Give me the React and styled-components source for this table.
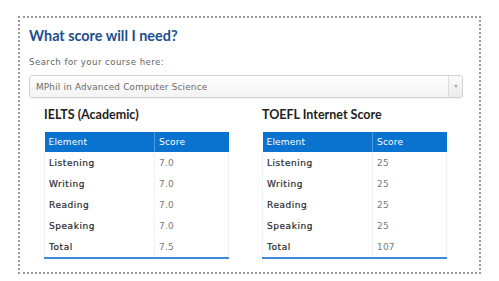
import React from "react";
import styled, { createGlobalStyle } from "styled-components";

const Global = createGlobalStyle`
  html, body { margin: 0; padding: 0; background: #fff; }
  body { font-family: "DejaVu Sans", Verdana, sans-serif; }
`;

const Page = styled.div`
  padding: 16px 18px 6px 18px;
`;

const Panel = styled.section`
  width: 463px;
  height: 258px;
  box-sizing: border-box;
  border: 2px dotted #9a9a9a;
  padding: 8px 16px 0 9px;
`;

const Title = styled.h2`
  margin: 0;
  font-family: "Lato", "Open Sans", sans-serif;
  font-weight: 700;
  font-size: 14.4px;
  line-height: 20px;
  color: #1d4f8e;
`;

const Label = styled.div`
  margin-top: 10px;
  font-size: 8.6px;
  line-height: 12px;
  letter-spacing: 0.45px;
  color: #666;
`;

const Select = styled.div`
  margin-top: 7px;
  height: 23px;
  box-sizing: border-box;
  display: flex;
  border: 1px solid #d2d2d2;
  border-radius: 3px;
  background: linear-gradient(#ffffff, #f3f3f3);
  box-shadow: 0 1px 1px rgba(0, 0, 0, 0.06);
`;

const SelectText = styled.div`
  flex: 1;
  display: flex;
  align-items: center;
  padding-left: 6px;
  font-size: 8.8px;
  letter-spacing: 0.22px;
  color: #6a6a6a;
`;

const SelectArrow = styled.div`
  width: 13px;
  border-left: 1px solid #dcdcdc;
  display: flex;
  align-items: center;
  justify-content: center;
  background: linear-gradient(#fafafa, #ececec);
  border-radius: 0 3px 3px 0;
`;

const Tri = styled.span`
  width: 0;
  height: 0;
  border-left: 2.5px solid transparent;
  border-right: 2.5px solid transparent;
  border-top: 3px solid #aaa;
`;

const Columns = styled.div`
  display: flex;
  gap: 33px;
  padding-left: 15px;
  margin-top: 9px;
`;

const Block = styled.div`
  width: 185px;
`;

const Heading = styled.h3`
  margin: 0 0 9px;
  font-family: "Lato", "Open Sans", sans-serif;
  font-weight: 700;
  font-size: 12.5px;
  line-height: 16px;
  color: #1e1e1e;
`;

const Table = styled.table`
  width: 185px;
  border-collapse: collapse;
  border-bottom: 2px solid #3d8ad6;
  table-layout: fixed;
`;

const Th = styled.th`
  background: #0a72cf;
  color: #fff;
  font-weight: 400;
  text-align: left;
  font-size: 9px;
  letter-spacing: 0.2px;
  height: 20px;
  padding: 0 4px;
  border-right: 1px solid ${(p) => (p.$last ? "#0a72cf" : "#4a9be0")};
`;

const Td = styled.td`
  height: 21px;
  padding: 0 4px;
  font-size: 9px;
  letter-spacing: ${(p) => (p.$value ? "0.2px" : "0.55px")};
  color: ${(p) => (p.$value ? "#7a7a7a" : "#2a2a2a")};
  border-left: 1px solid #edf1f5;
  border-right: 1px solid #edf1f5;
  -webkit-text-stroke: ${(p) => (p.$value ? "0" : "0.2px #2a2a2a")};
`;

const ScoreTable = ({ title, rows }) => (
  <Block>
    <Heading>{title}</Heading>
    <Table>
      <colgroup>
        <col style={{ width: 110 }} />
        <col />
      </colgroup>
      <thead>
        <tr>
          <Th>Element</Th>
          <Th $last>Score</Th>
        </tr>
      </thead>
      <tbody>
        {rows.map(([name, score]) => (
          <tr key={name}>
            <Td>{name}</Td>
            <Td $value>{score}</Td>
          </tr>
        ))}
      </tbody>
    </Table>
  </Block>
);

const ielts = [
  ["Listening", "7.0"],
  ["Writing", "7.0"],
  ["Reading", "7.0"],
  ["Speaking", "7.0"],
  ["Total", "7.5"],
];

const toefl = [
  ["Listening", "25"],
  ["Writing", "25"],
  ["Reading", "25"],
  ["Speaking", "25"],
  ["Total", "107"],
];

export default function App() {
  return (
    <Page>
      <Global />
      <Panel>
        <Title>What score will I need?</Title>
        <Label>Search for your course here:</Label>
        <Select>
          <SelectText>MPhil in Advanced Computer Science</SelectText>
          <SelectArrow>
            <Tri />
          </SelectArrow>
        </Select>
        <Columns>
          <ScoreTable title="IELTS (Academic)" rows={ielts} />
          <ScoreTable title="TOEFL Internet Score" rows={toefl} />
        </Columns>
      </Panel>
    </Page>
  );
}
